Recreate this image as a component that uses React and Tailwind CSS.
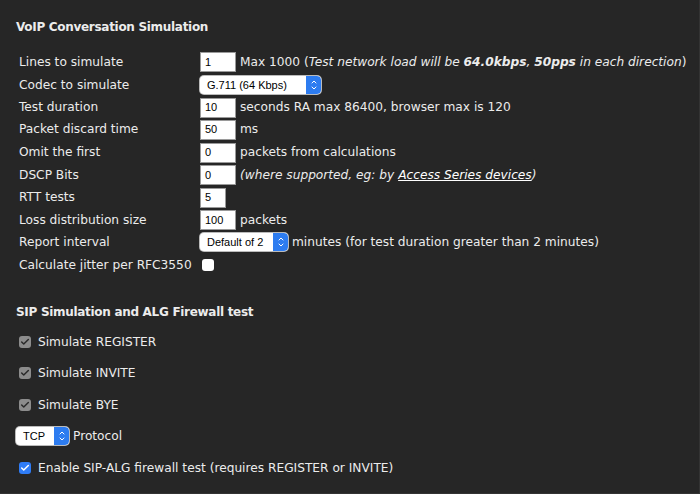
import { Check, ChevronUp, ChevronDown } from 'lucide-react';

function TextBox({ value, w = 'w-[36px]' }) {
  return (
    <div className={`${w} h-[20px] bg-white border border-[#9a9a9a] flex items-center pl-[4px] text-[11px] text-black font-['Liberation_Sans',sans-serif]`}>
      {value}
    </div>
  );
}

function Select({ value, w }) {
  return (
    <div className={`${w} h-[18px] bg-white rounded-[4px] flex items-center justify-between overflow-hidden shadow-[0_0_0_1px_#bbb] font-['Liberation_Sans',sans-serif]`}>
      <span className="pl-[7px] text-[11px] text-black">{value}</span>
      <span className="w-[15px] h-full bg-[#2d7cf0] flex flex-col items-center justify-center rounded-r-[4px] text-white">
        <ChevronUp size={8} strokeWidth={3} className="-mb-[1px]" />
        <ChevronDown size={8} strokeWidth={3} className="-mt-[1px]" />
      </span>
    </div>
  );
}

function Box({ checked, blue }) {
  if (!checked) {
    return <span className="w-[12px] h-[12px] bg-white rounded-[3px] inline-block" />;
  }
  return (
    <span className={`w-[12px] h-[12px] rounded-[3px] inline-flex items-center justify-center ${blue ? 'bg-[#2f7cf6] text-white' : 'bg-[#8c8c8c] text-[#2a2a2a]'}`}>
      <Check size={10} strokeWidth={3.5} />
    </span>
  );
}

function Row({ h, label, children }) {
  return (
    <div className={`${h} flex items-center`}>
      <div className="w-[181px] shrink-0">{label}</div>
      <div className="flex items-center gap-[4px]">{children}</div>
    </div>
  );
}

export default function App() {
  return (
    <div className="w-[700px] h-[494px] bg-[#262626] text-[#ececec] text-[12.2px] font-['DejaVu_Sans',sans-serif] border-r border-b border-[#333] overflow-hidden">
      <h2 className="font-bold text-[12px] tracking-[-0.3px] pl-[16px] pt-[18px] h-[51px]">VoIP Conversation Simulation</h2>

      <div className="pl-[19px] flex flex-col">
        <Row h="h-[22px]" label="Lines to simulate">
          <TextBox value="1" />
          <span>
            Max 1000 (<i>Test network load will be <b>64.0kbps</b>, <b>50pps</b> in each direction</i>)
          </span>
        </Row>
        <Row h="h-[24px]" label="Codec to simulate">
          <Select value="G.711 (64 Kbps)" w="w-[121px]" />
        </Row>
        <Row h="h-[21px]" label="Test duration">
          <TextBox value="10" />
          <span>seconds RA max 86400, browser max is 120</span>
        </Row>
        <Row h="h-[23px]" label="Packet discard time">
          <TextBox value="50" />
          <span>ms</span>
        </Row>
        <Row h="h-[23px]" label="Omit the first">
          <TextBox value="0" />
          <span>packets from calculations</span>
        </Row>
        <Row h="h-[22px]" label="DSCP Bits">
          <TextBox value="0" />
          <span className="italic">
            (where supported, eg: by <a className="underline text-white">Access Series devices</a>)
          </span>
        </Row>
        <Row h="h-[23px]" label="RTT tests">
          <TextBox value="5" w="w-[26px]" />
        </Row>
        <Row h="h-[22px]" label="Loss distribution size">
          <TextBox value="100" />
          <span>packets</span>
        </Row>
        <Row h="h-[23px]" label="Report interval">
          <Select value="Default of 2" w="w-[88px]" />
          <span>minutes (for test duration greater than 2 minutes)</span>
        </Row>
        <div className="h-[22px] flex items-center gap-[10px]">
          <span>Calculate jitter per RFC3550</span>
          <Box checked={false} />
        </div>
      </div>

      <h2 className="font-bold text-[12px] tracking-[-0.3px] pl-[16px] mt-[24px] h-[24px] flex items-center">SIP Simulation and ALG Firewall test</h2>

      <div className="pl-[19px] flex flex-col mt-[2px]">
        <div className="h-[31.5px] flex items-center gap-[7px]">
          <Box checked />
          <span>Simulate REGISTER</span>
        </div>
        <div className="h-[31.5px] flex items-center gap-[7px]">
          <Box checked />
          <span>Simulate INVITE</span>
        </div>
        <div className="h-[31.5px] flex items-center gap-[7px]">
          <Box checked />
          <span>Simulate BYE</span>
        </div>
        <div className="h-[31.5px] flex items-center gap-[4px] -ml-[3px]">
          <Select value="TCP" w="w-[53px]" />
          <span>Protocol</span>
        </div>
        <div className="h-[31.5px] flex items-center gap-[7px]">
          <Box checked blue />
          <span>Enable SIP-ALG firewall test (requires REGISTER or INVITE)</span>
        </div>
      </div>
    </div>
  );
}
